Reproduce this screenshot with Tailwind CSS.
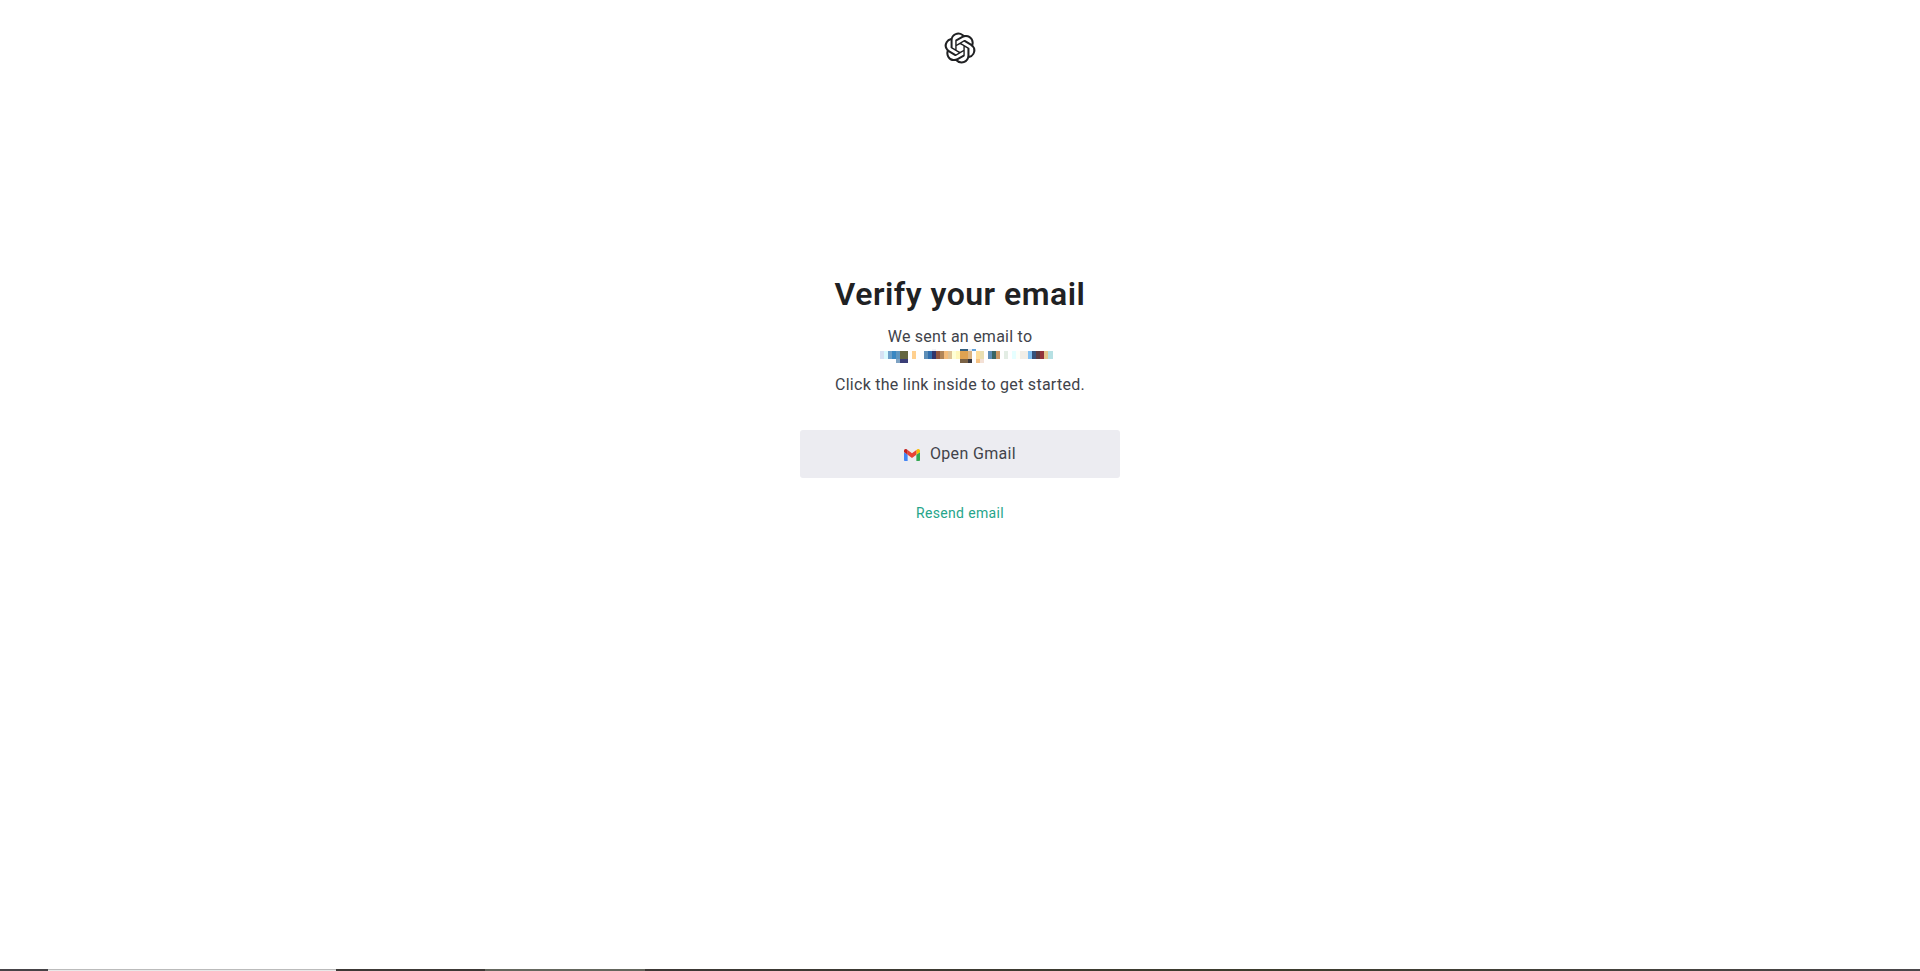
<!DOCTYPE html>
<html lang="en">
<head>
  <meta charset="UTF-8">
  <meta name="viewport" content="width=device-width, initial-scale=1.0">
  <title>Verify your email</title>
  <script src="https://cdn.jsdelivr.net/npm/@tailwindcss/browser@4"></script>
</head>
<body class="h-screen overflow-hidden flex flex-col bg-white text-[#41434a] font-['Roboto',sans-serif]">
  <header class="h-16 flex justify-center pt-8">
    <svg class="size-8" viewBox="-0.4 -0.4 24.8 24.8" fill="#202123" aria-label="OpenAI">
      <path d="M22.2819 9.8211a5.9847 5.9847 0 0 0-.5157-4.9108 6.0462 6.0462 0 0 0-6.5098-2.9A6.0651 6.0651 0 0 0 4.9807 4.1818a5.9847 5.9847 0 0 0-3.9977 2.9 6.0462 6.0462 0 0 0 .7427 7.0966 5.98 5.98 0 0 0 .511 4.9107 6.051 6.051 0 0 0 6.5146 2.9001A5.9847 5.9847 0 0 0 13.2599 24a6.0557 6.0557 0 0 0 5.7718-4.2058 5.9894 5.9894 0 0 0 3.9977-2.9001 6.0557 6.0557 0 0 0-.7475-7.0729zm-9.022 12.6081a4.4755 4.4755 0 0 1-2.8764-1.0408l.1419-.0804 4.7783-2.7582a.7948.7948 0 0 0 .3927-.6813v-6.7369l2.02 1.1686a.071.071 0 0 1 .038.052v5.5826a4.504 4.504 0 0 1-4.4945 4.4944zm-9.6607-4.1254a4.4708 4.4708 0 0 1-.5346-3.0137l.142.0852 4.783 2.7582a.7712.7712 0 0 0 .7806 0l5.8428-3.3685v2.3324a.0804.0804 0 0 1-.0332.0615L9.74 19.9502a4.4992 4.4992 0 0 1-6.1408-1.6464zM2.3408 7.8956a4.485 4.485 0 0 1 2.3655-1.9728V11.6a.7664.7664 0 0 0 .3879.6765l5.8144 3.3543-2.0201 1.1685a.0757.0757 0 0 1-.071 0l-4.8303-2.7865A4.504 4.504 0 0 1 2.3408 7.872zm16.5963 3.8558L13.1038 8.364 15.1192 7.2a.0757.0757 0 0 1 .071 0l4.8303 2.7913a4.4944 4.4944 0 0 1-.6765 8.1042v-5.6772a.79.79 0 0 0-.407-.667zm2.0107-3.0231l-.142-.0852-4.7735-2.7818a.7759.7759 0 0 0-.7854 0L9.409 9.2297V6.8974a.0662.0662 0 0 1 .0284-.0615l4.8303-2.7866a4.4992 4.4992 0 0 1 6.6802 4.66zM8.3065 12.863l-2.02-1.1638a.0804.0804 0 0 1-.038-.0567V6.0742a4.4992 4.4992 0 0 1 7.3757-3.4537l-.142.0805L8.704 5.459a.7948.7948 0 0 0-.3927.6813zm1.0976-2.3654l2.602-1.4998 2.6069 1.4998v2.9994l-2.5974 1.4997-2.6067-1.4997Z"/>
    </svg>
  </header>

  <main class="w-80 mx-auto mt-[210px] flex flex-col items-center grow">
    <h1 class="text-[32px] leading-10 font-semibold tracking-[0.5px] text-[#202123] whitespace-nowrap">Verify your email</h1>
    <div class="mt-[11px] flex flex-col items-center text-base leading-6 whitespace-nowrap">
      <p class="tracking-[0.25px]">We sent an email to</p>
      <!-- Masked address -->
      <div class="h-6 w-[173px] ml-[13px]">
        <svg width="173" height="14" viewBox="0 0 173 14" shape-rendering="crispEdges">
          <path fill="#f2f3f9" d="M52 0h4v2h-4z"/>
          <path fill="#35607f" d="M80 0h8v2h-8z"/>
          <path fill="#e3e9f3" d="M88 0h4v2h-4z"/>
          <path fill="#64a3d8" d="M92 0h4v2h-4z"/>
          <path fill="#d7e1f3" d="M0 2h4v8H0z"/>
          <path fill="#dafaff" d="M4 2h4v8H4z"/>
          <path fill="#6c9fc9" d="M8 2h4v8H8z"/>
          <path fill="#3a87c2" d="M12 2h4v8h-4z"/>
          <path fill="#6096bf" d="M16 2h4v8h-4z"/>
          <path fill="#64663f" d="M20 2h8v8h-8z"/>
          <path fill="#ffd08f" d="M32 2h4v8h-4z"/>
          <path fill="#5e8fb8" d="M44 2h4v8h-4zM108 2h4v8h-4z"/>
          <path fill="#326fad" d="M48 2h4v8h-4z"/>
          <path fill="#33356b" d="M52 2h4v8h-4z"/>
          <path fill="#94573f" d="M56 2h4v8h-4z"/>
          <path fill="#b08557" d="M60 2h4v8h-4z"/>
          <path fill="#f3bd7c" d="M64 2h4v8h-4z"/>
          <path fill="#dec295" d="M68 2h4v8h-4z"/>
          <path fill="#ffffd5" d="M72 2h4v8h-4z"/>
          <path fill="#fff7bb" d="M76 2h4v8h-4z"/>
          <path fill="#dea251" d="M80 2h8v8h-8z"/>
          <path fill="#dcb581" d="M88 2h4v8h-4z"/>
          <path fill="#ffdf9b" d="M96 2h4v8h-4z"/>
          <path fill="#e9dfb2" d="M100 2h4v8h-4z"/>
          <path fill="#3a6665" d="M112 2h4v8h-4z"/>
          <path fill="#cb9865" d="M116 2h4v8h-4z"/>
          <path fill="#e3ede4" d="M124 2h4v8h-4z"/>
          <path fill="#e6ffff" d="M132 2h4v8h-4z"/>
          <path fill="#fdfff9" d="M136 2h4v8h-4z"/>
          <path fill="#f1eee7" d="M140 2h8v8h-8z"/>
          <path fill="#82c1f3" d="M148 2h4v8h-4z"/>
          <path fill="#33507b" d="M152 2h4v8h-4z"/>
          <path fill="#5b3b43" d="M156 2h4v8h-4z"/>
          <path fill="#93333b" d="M160 2h4v8h-4z"/>
          <path fill="#e6c78e" d="M164 2h4v8h-4z"/>
          <path fill="#b6e0e3" d="M168 2h5v8h-5z"/>
          <path fill="#7fa3c4" d="M16 10h4v4h-4z"/>
          <path fill="#3a3d76" d="M20 10h8v4h-8z"/>
          <path fill="#7a6245" d="M80 10h8v4h-8z"/>
          <path fill="#33353f" d="M88 10h4v4h-4z"/>
          <path fill="#f6c283" d="M96 10h4v4h-4z"/>
          <path fill="#f3e0d5" d="M100 10h4v4h-4z"/>
        </svg>
      </div>
      <p class="tracking-[0.27px]">Click the link inside to get started.</p>
    </div>

    <button class="mt-[33px] w-full h-12 shrink-0 flex items-center justify-center gap-2.5 rounded-[3px] bg-[#ececf1] text-base tracking-[0.35px]">
      <svg class="w-4 h-3 mt-0.5" viewBox="52 42 88 66">
        <path fill="#4285f4" d="M58 108h14V74L52 59v43c0 3.32 2.69 6 6 6"/>
        <path fill="#34a853" d="M120 108h14c3.32 0 6-2.69 6-6V59l-20 15"/>
        <path fill="#fbbc04" d="M120 48v26l20-15v-8c0-7.42-8.47-11.65-14.4-7.2"/>
        <path fill="#ea4335" d="M72 74V48l24 18 24-18v26L96 92"/>
        <path fill="#c5221f" d="M52 51v8l20 15V48l-5.6-4.2c-5.94-4.45-14.4-.22-14.4 7.2"/>
      </svg>
      <span>Open Gmail</span>
    </button>
    <a href="#" class="mt-[25px] text-sm leading-5 tracking-[0.35px] text-[#26a58a]">Resend email</a>
  </main>

  <!-- Bottom edge strip -->
  <footer class="flex h-0.5 shrink-0">
    <div class="w-12 bg-[#464347]"></div>
    <div class="w-72 bg-[#e8e8e8] border-t border-[#bbbbbb]"></div>
    <div class="w-[149px] bg-[#3c3835]"></div>
    <div class="w-40 bg-[#64665d]"></div>
    <div class="grow bg-linear-to-r from-[#3c3835] via-[#3d3c2d] to-[#4b474b]"></div>
  </footer>
</body>
</html>
